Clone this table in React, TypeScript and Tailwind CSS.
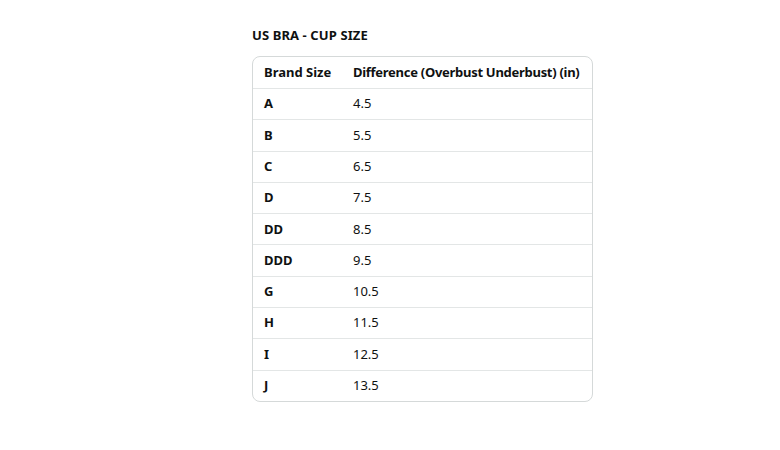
import React from 'react';

const rows = [
  { size: 'A', diff: '4.5' },
  { size: 'B', diff: '5.5' },
  { size: 'C', diff: '6.5' },
  { size: 'D', diff: '7.5' },
  { size: 'DD', diff: '8.5' },
  { size: 'DDD', diff: '9.5' },
  { size: 'G', diff: '10.5' },
  { size: 'H', diff: '11.5' },
  { size: 'I', diff: '12.5' },
  { size: 'J', diff: '13.5' },
];

const App = () => {
  return (
    <div className="min-h-[450px] w-[780px] bg-white font-['Noto_Sans',sans-serif] text-[#0f1111]">
      <div className="pt-[27px] pl-[252px]">
        {/* Title */}
        <h2 className="text-[13px] font-bold leading-[16px] tracking-[0.1px]">US BRA - CUP SIZE</h2>

        {/* Table */}
        <div className="mt-[13px] w-[341px] overflow-hidden rounded-lg border border-[#d5d9d9]">
          <div className="flex h-[31px] items-center text-[13px] font-bold">
            <div className="w-[100px] pl-[11px]">Brand Size</div>
            <div className="tracking-[-0.28px]">Difference (Overbust Underbust) (in)</div>
          </div>
          {rows.map((row) => (
            <div key={row.size} className="flex h-[31.3px] items-center border-t border-[#e3e6e6] text-[13px]">
              <div className="w-[100px] pl-[11px] font-bold">{row.size}</div>
              <div>{row.diff}</div>
            </div>
          ))}
        </div>
      </div>
    </div>
  );
};

export default App;
